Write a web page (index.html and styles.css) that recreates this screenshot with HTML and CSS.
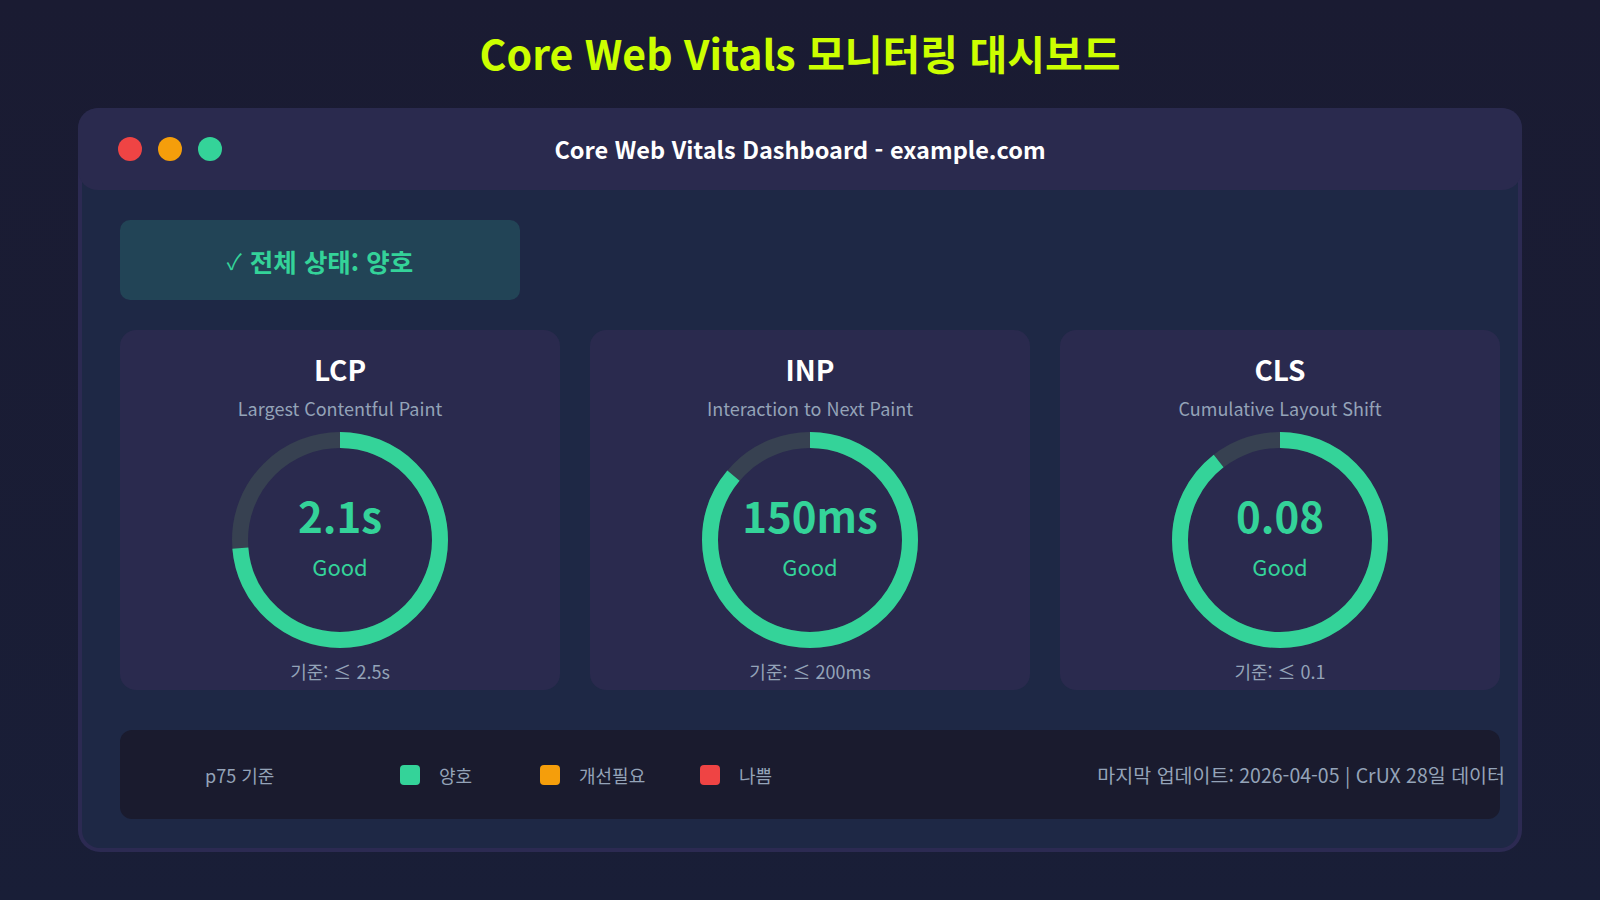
FILE: index.html
```html
<!DOCTYPE html>
<html lang="ko">
<head>
  <meta charset="UTF-8">
  <title>Core Web Vitals 모니터링 대시보드</title>
  <link rel="stylesheet" href="styles.css">
</head>
<body>

  <h1 class="page-title">Core Web Vitals 모니터링 대시보드</h1>

  <div class="window">
    <div class="window-bar">
      <div class="dots">
        <span class="dot red"></span>
        <span class="dot orange"></span>
        <span class="dot green"></span>
      </div>
      <div class="window-title">Core Web Vitals Dashboard - example.com</div>
    </div>

    <div class="window-body">
      <div class="status"><span class="check">✓</span>전체 상태: 양호</div>

      <div class="cards">
        <div class="card">
          <h3>LCP</h3>
          <p class="card-sub">Largest Contentful Paint</p>
          <div class="gauge">
            <svg class="ring" width="220" height="220" viewBox="0 0 220 220">
              <circle class="track" cx="110" cy="110" r="100"/>
              <circle class="bar" cx="110" cy="110" r="100" stroke-dasharray="628.3" stroke-dashoffset="166" transform="rotate(-90 110 110)"/>
            </svg>
            <div class="gauge-text">
              <div class="value">2.1s</div>
              <div class="grade">Good</div>
            </div>
          </div>
          <p class="limit">기준: ≤ 2.5s</p>
        </div>

        <div class="card">
          <h3>INP</h3>
          <p class="card-sub">Interaction to Next Paint</p>
          <div class="gauge">
            <svg class="ring" width="220" height="220" viewBox="0 0 220 220">
              <circle class="track" cx="110" cy="110" r="100"/>
              <circle class="bar" cx="110" cy="110" r="100" stroke-dasharray="628.3" stroke-dashoffset="88" transform="rotate(-90 110 110)"/>
            </svg>
            <div class="gauge-text">
              <div class="value">150ms</div>
              <div class="grade">Good</div>
            </div>
          </div>
          <p class="limit">기준: ≤ 200ms</p>
        </div>

        <div class="card">
          <h3>CLS</h3>
          <p class="card-sub">Cumulative Layout Shift</p>
          <div class="gauge">
            <svg class="ring" width="220" height="220" viewBox="0 0 220 220">
              <circle class="track" cx="110" cy="110" r="100"/>
              <circle class="bar" cx="110" cy="110" r="100" stroke-dasharray="628.3" stroke-dashoffset="67" transform="rotate(-90 110 110)"/>
            </svg>
            <div class="gauge-text">
              <div class="value">0.08</div>
              <div class="grade">Good</div>
            </div>
          </div>
          <p class="limit">기준: ≤ 0.1</p>
        </div>
      </div>

      <div class="footer">
        <span class="footer-label">p75 기준</span>
        <div class="legend">
          <span class="legend-item"><i class="swatch good"></i>양호</span>
          <span class="legend-item"><i class="swatch warn"></i>개선필요</span>
          <span class="legend-item"><i class="swatch bad"></i>나쁨</span>
        </div>
        <span class="updated">마지막 업데이트: 2026-04-05 | CrUX 28일 데이터</span>
      </div>
    </div>
  </div>

</body>
</html>
```

FILE: styles.css
```css
* {
  box-sizing: border-box;
}

body {
  margin: 0;
  padding-top: 24px;
  height: 900px;
  overflow: hidden;
  font-family: "Noto Sans CJK KR", "Noto Sans", sans-serif;
  background: linear-gradient(180deg, #1a1b32 0%, #191e37 100%);
  color: #ffffff;
}

.page-title {
  margin: 0 0 28px;
  text-align: center;
  font-size: 41px;
  line-height: 56px;
  font-weight: 700;
  color: #ccff00;
}

.window {
  width: 1444px;
  margin: 0 auto;
  background: #1e2845;
  border: 4px solid #2c2a52;
  border-radius: 22px;
}

.window-bar {
  display: grid;
  grid-template-columns: 1fr auto 1fr;
  align-items: center;
  height: 82px;
  margin: -4px -4px 0;
  padding: 0 40px;
  background: #2a2a4e;
  border-radius: 20px;
}

.dots {
  display: flex;
  gap: 16px;
}

.dot {
  width: 24px;
  height: 24px;
  border-radius: 50%;
}

.dot.red { background: #ef4444; }
.dot.orange { background: #f59e0b; }
.dot.green { background: #34d399; }

.window-title {
  font-size: 23.5px;
  line-height: 32px;
  font-weight: 700;
}

.window-body {
  padding: 30px 18px 29px 38px;
}

.status {
  width: 400px;
  height: 80px;
  display: flex;
  align-items: center;
  justify-content: center;
  background: #224456;
  border-radius: 10px;
  color: #34d399;
  font-size: 25.5px;
  font-weight: 700;
}

.check {
  font-weight: 400;
  font-size: 22px;
  margin-right: 8px;
}

.cards {
  display: grid;
  grid-template-columns: repeat(3, 440px);
  gap: 30px;
  margin-top: 30px;
}

.card {
  display: flex;
  flex-direction: column;
  align-items: center;
  height: 360px;
  padding: 21px 0 6px;
  background: #2a2a4e;
  border-radius: 16px;
}

.card h3 {
  margin: 0;
  font-size: 28px;
  line-height: 36px;
  font-weight: 700;
}

.card-sub {
  margin: 8px 0 0;
  font-size: 18px;
  line-height: 26px;
  color: #94a3b8;
}

.gauge {
  display: grid;
  place-items: center;
  margin-top: 9px;
}

.gauge > * {
  grid-area: 1 / 1;
}

.ring {
  display: block;
}

.ring circle {
  fill: none;
  stroke-width: 16;
}

.ring .track { stroke: #374151; }
.ring .bar { stroke: #34d399; }

.gauge-text {
  text-align: center;
  color: #34d399;
  padding-bottom: 11px;
}

.value {
  font-size: 42px;
  line-height: 50px;
  font-weight: 700;
}

.grade {
  margin-top: 12px;
  font-size: 22px;
  line-height: 28px;
}

.limit {
  margin: 8px 0 0;
  font-size: 18px;
  line-height: 26px;
  color: #94a3b8;
}

.footer {
  display: flex;
  align-items: center;
  height: 89px;
  margin-top: 40px;
  padding-left: 85px;
  background: #1a1b2e;
  border-radius: 12px;
  font-size: 18px;
  color: #94a3b8;
  white-space: nowrap;
}

.footer-label {
  width: 195px;
}

.legend {
  display: grid;
  grid-template-columns: 140px 160px auto;
}

.legend-item {
  display: flex;
  align-items: center;
  gap: 19px;
}

.swatch {
  width: 20px;
  height: 20px;
  border-radius: 4px;
}

.swatch.good { background: #34d399; }
.swatch.warn { background: #f59e0b; }
.swatch.bad { background: #ef4444; }

.updated {
  margin-left: auto;
  margin-right: -5px;
  font-size: 19.5px;
}
```
